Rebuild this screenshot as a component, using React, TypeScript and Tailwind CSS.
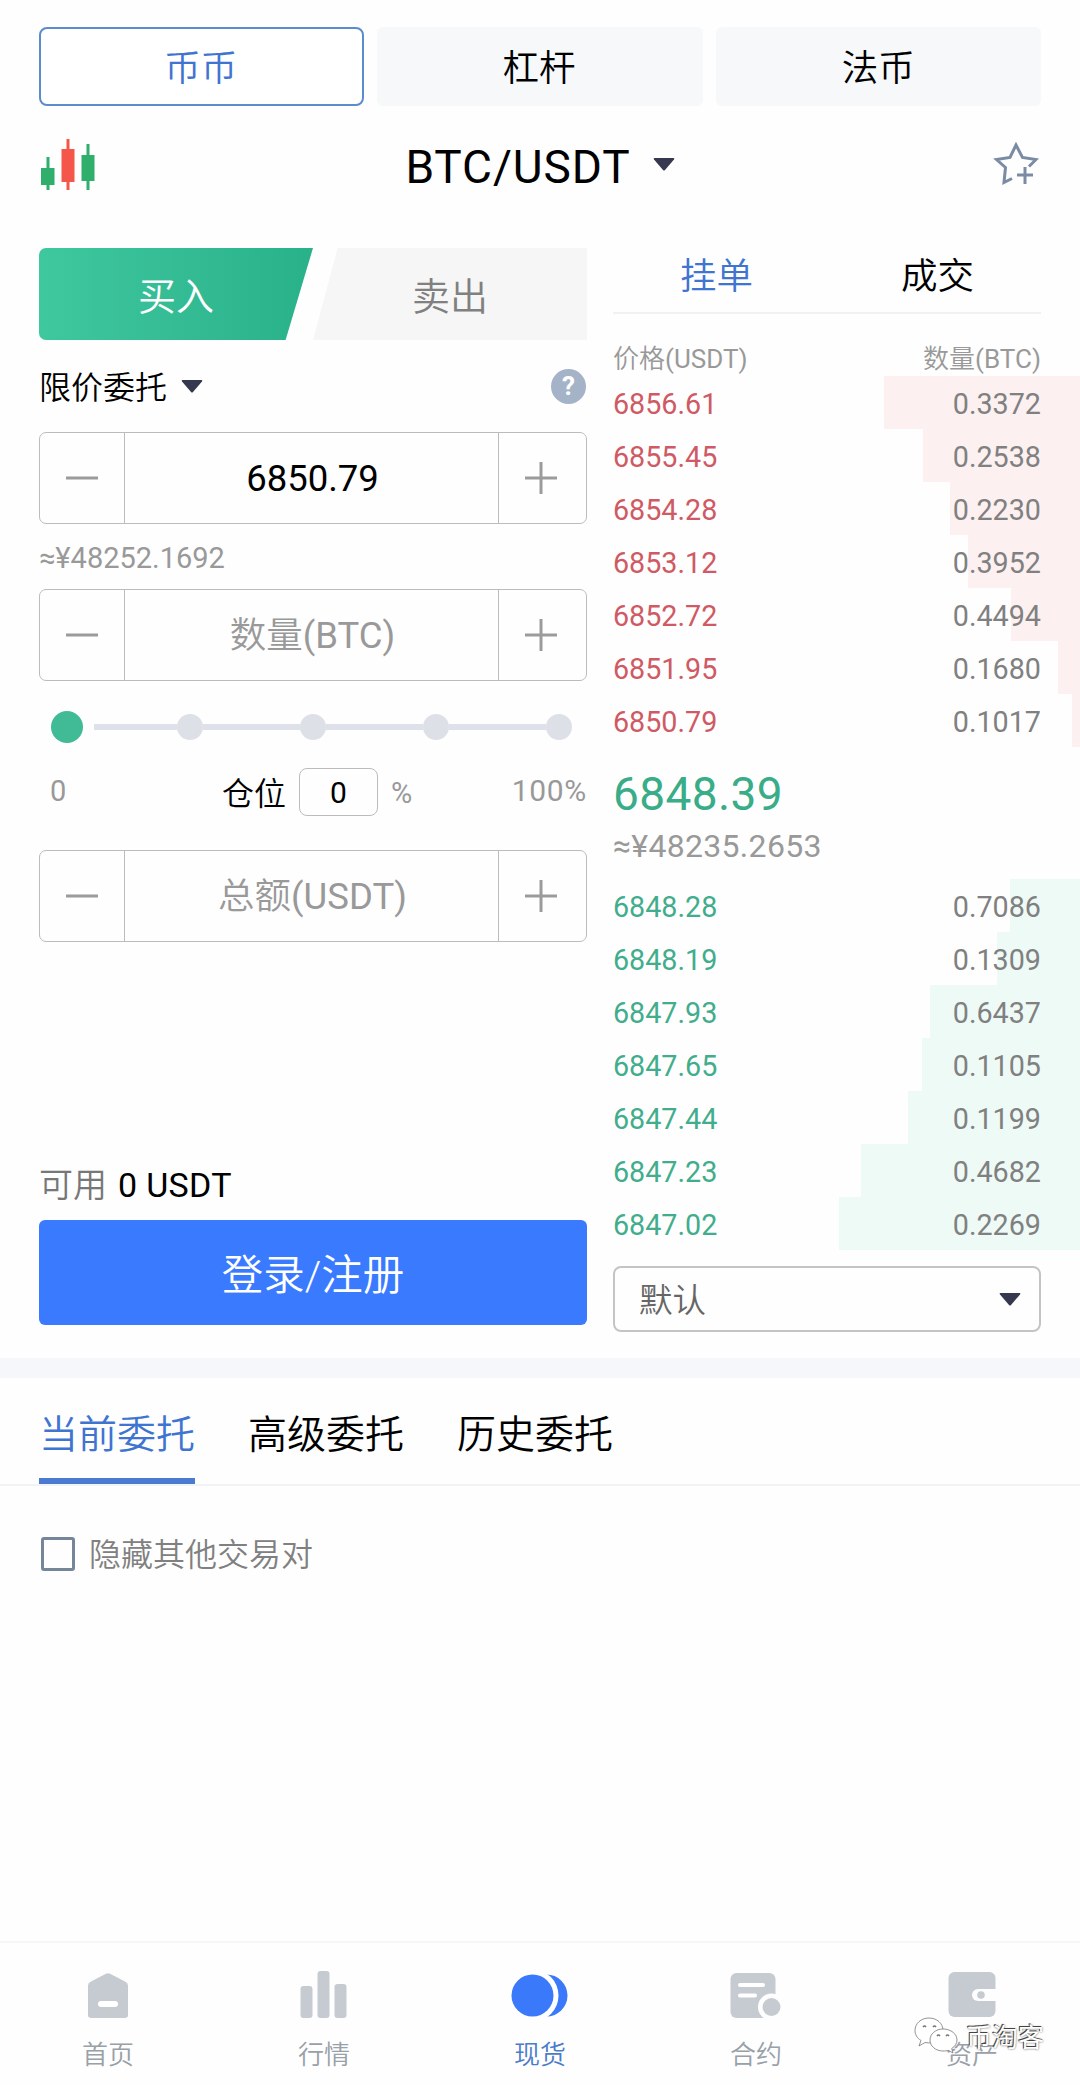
import type { ReactNode } from 'react';

type Level = { price: string; amount: string; depth: number };

const asks: Level[] = [
  { price: '6856.61', amount: '0.3372', depth: 196 },
  { price: '6855.45', amount: '0.2538', depth: 157 },
  { price: '6854.28', amount: '0.2230', depth: 130 },
  { price: '6853.12', amount: '0.3952', depth: 112 },
  { price: '6852.72', amount: '0.4494', depth: 69 },
  { price: '6851.95', amount: '0.1680', depth: 22 },
  { price: '6850.79', amount: '0.1017', depth: 8 },
];

const bids: Level[] = [
  { price: '6848.28', amount: '0.7086', depth: 70 },
  { price: '6848.19', amount: '0.1309', depth: 83 },
  { price: '6847.93', amount: '0.6437', depth: 150 },
  { price: '6847.65', amount: '0.1105', depth: 158 },
  { price: '6847.44', amount: '0.1199', depth: 172 },
  { price: '6847.23', amount: '0.4682', depth: 219 },
  { price: '6847.02', amount: '0.2269', depth: 241 },
];

function Caret() {
  return (
    <svg width="22" height="13" viewBox="0 0 22 13" className="shrink-0">
      <path d="M1.5 0h19q1.5 0 .5 1.5L12 12q-1 1-2 0L1 1.5Q0 0 1.5 0z" fill="#36384f" />
    </svg>
  );
}

// thin Chinese label followed by the currency in regular weight
function UnitLabel({ text, unit }: { text: string; unit: string }) {
  return (
    <span className="font-[350]">
      {text}
      <span className="font-normal">({unit})</span>
    </span>
  );
}

function Stepper({ children }: { children: ReactNode }) {
  return (
    <div className="flex h-[92px] shrink-0 rounded-[7px] border border-[#bcbcbc]">
      <div className="flex w-[85px] items-center justify-center border-r border-[#bcbcbc]">
        <svg width="34" height="34" viewBox="0 0 34 34" stroke="#9b9b9b" strokeWidth="3">
          <path d="M1 17h32" />
        </svg>
      </div>
      <div className="flex flex-1 items-center justify-center pt-[3px] pl-[2px] text-[36.5px] text-[#999]">
        {children}
      </div>
      <div className="flex w-[88px] items-center justify-center border-l border-[#bcbcbc] pr-[3px]">
        <svg width="34" height="34" viewBox="0 0 34 34" stroke="#9b9b9b" strokeWidth="3">
          <path d="M1 17h32M17 1v32" />
        </svg>
      </div>
    </div>
  );
}

function BookRow({ level, side }: { level: Level; side: 'ask' | 'bid' }) {
  return (
    <div className="relative flex h-[53px] shrink-0 items-center justify-between pt-[4px] pr-[39px] text-[28.7px]">
      <div
        className={`absolute inset-y-0 right-0 ${side === 'ask' ? 'bg-[#fcf0f0]' : 'bg-[#eefaf6]'}`}
        style={{ width: level.depth }}
      />
      <span className={`relative ${side === 'ask' ? 'text-[#cf5a64]' : 'text-[#41ad8c]'}`}>{level.price}</span>
      <span className="relative text-[#808080]">{level.amount}</span>
    </div>
  );
}

function NavItem({ label, active, children }: { label: string; active?: boolean; children: ReactNode }) {
  return (
    <div className="flex flex-1 flex-col items-center">
      <svg width="64" height="56" viewBox="0 0 64 56" fill={active ? '#3b79fb' : '#c6cbd1'}>
        {children}
      </svg>
      <span className={`mt-[12px] text-[26px] leading-[40px] ${active ? 'text-[#4a7cc9]' : 'text-[#98a0a8]'}`}>
        {label}
      </span>
    </div>
  );
}

export default function App() {
  return (
    <div className="flex h-[2085px] w-[1080px] flex-col overflow-hidden bg-[#fefefe] font-['Roboto','Noto_Sans_CJK_SC',sans-serif] leading-none font-normal">
      {/* market type */}
      <div className="mt-[27px] grid h-[79px] shrink-0 grid-cols-3 gap-[13px] px-[39px] text-[36.5px] font-[350]">
        <div className="flex items-center justify-center rounded-[8px] border-2 border-[#5b8ccb] bg-white pt-[6px] pr-[2px] text-[#3f74d1]">
          币币
        </div>
        <div className="flex items-center justify-center rounded-[6px] bg-[#f6f8fa] pt-[6px] pr-[2px] text-black">杠杆</div>
        <div className="flex items-center justify-center rounded-[6px] bg-[#f6f8fa] pt-[6px] text-black">法币</div>
      </div>

      {/* pair */}
      <header className="flex h-[120px] shrink-0 items-center justify-between pr-[41px] pb-[3px] pl-[41px]">
        <svg width="56" height="52" viewBox="0 0 56 52">
          <path d="M5.500 18h3v11h5v17H8.500v5h-3v-5H0V29h5.500z" fill="#30ae6b" />
          <path d="M25.500 0h3v10h5v33h-5v8h-3v-8h-5V10h5z" fill="#f4564a" />
          <path d="M45.500 5h3v11h5v26h-5v9h-3V42h-5V16h5z" fill="#30ae6b" />
        </svg>
        <div className="flex items-center gap-[22px] pt-[4px] pr-[10px]">
          <h1 className="text-[46px] tracking-[0.9px] text-black">BTC/USDT</h1>
          <div className="pb-[5px]">
            <Caret />
          </div>
        </div>
        <svg width="46" height="46" viewBox="0 0 46 46" fill="none" stroke="#7b8ba3" strokeWidth="3">
          <path d="M19 36.500l-8 4 1.500-15-9-8 13.500-2L23 3l6.500 12.500 13.500 2-7 7" />
          <path d="M24 33h16M32 25v17" />
        </svg>
      </header>

      <main className="flex h-[1132px] shrink-0 pl-[39px]">
        {/* order form */}
        <section className="flex w-[548px] flex-col pt-[22px]">
          <div className="flex h-[92px] shrink-0 text-[38px] font-[350]">
            <div className="flex w-[274px] items-center justify-center rounded-l-[7px] bg-linear-to-r from-[#3fc79e] to-[#29b18a] [clip-path:polygon(0_0,100%_0,90%_100%,0_100%)] pt-[5px] text-white">
              买入
            </div>
            <div className="flex flex-1 items-center justify-center bg-[#f6f6f6] [clip-path:polygon(9%_0,100%_0,100%_100%,0_100%)] pt-[5px] text-[#808080]">
              卖出
            </div>
          </div>

          <div className="flex h-[92px] shrink-0 items-center justify-between">
            <div className="flex items-center gap-[14px]">
              <span className="pt-[4px] text-[32px] font-[350] text-black">限价委托</span>
              <Caret />
            </div>
            <div className="mr-px flex size-[35px] items-center justify-center rounded-full bg-[#a5b3c8] text-[26px] font-bold text-white">
              ?
            </div>
          </div>

          <Stepper>
            <span className="text-black">6850.79</span>
          </Stepper>
          <div className="flex h-[65px] shrink-0 items-center pt-[4px] text-[29px] text-[#999]">≈¥48252.1692</div>
          <Stepper>
            <UnitLabel text="数量" unit="BTC" />
          </Stepper>

          {/* position slider */}
          <div className="flex h-[91px] shrink-0 items-center px-[12px]">
            <div className="size-[32px] rounded-full bg-[#41ba96]" />
            <div className="ml-[11px] flex flex-1 items-center pr-[3px]">
              {[0, 1, 2, 3].map(i => (
                <div key={i} className={`flex items-center ${i === 0 ? 'w-[109px]' : 'w-[123px]'}`}>
                  <div className="h-[6px] flex-1 bg-[#dfe1ea]" />
                  <div className="size-[26px] rounded-full bg-[#dde0e7]" />
                </div>
              ))}
            </div>
          </div>

          <div className="-mt-[4px] flex h-[48px] shrink-0 items-center pl-[11px] text-[29px] text-[#999]">
            <span className="w-[172px] pb-[2px]">0</span>
            <span className="pt-[3px] text-[32px] font-[350] text-black">仓位</span>
            <div className="mx-[13px] flex h-[48px] w-[79px] items-center justify-center rounded-[8px] border border-[#bcbcbc] pt-[2px] text-[30px] text-black">
              0
            </div>
            <span className="pt-[3px]">%</span>
            <span className="ml-auto pb-[3px] text-[30px] tracking-[0.7px]">100%</span>
          </div>
          <div className="h-[34px] shrink-0" />

          <Stepper>
            <UnitLabel text="总额" unit="USDT" />
          </Stepper>

          <div className="mt-auto mb-[18px] flex items-center gap-[11px] text-[34px]">
            <span className="font-[350] text-[#777]">可用</span>
            <span className="tracking-[0.3px] text-black">0 USDT</span>
          </div>
          <button className="mb-[33px] h-[105px] shrink-0 rounded-[6px] bg-[#3a7aff] pt-[7px] text-[41.5px] font-[350] text-white">
            登录/注册
          </button>
        </section>

        {/* order book */}
        <section className="ml-[26px] flex flex-1 flex-col pt-[22px]">
          <div className="mr-[39px] flex h-[66px] shrink-0 justify-between border-b-2 border-[#f0f1f3] px-[67px] pt-[11px] text-[36.5px] font-[350]">
            <span className="text-[#3f74d1]">挂单</span>
            <span className="text-black">成交</span>
          </div>
          <div className="mr-[39px] flex h-[62px] shrink-0 items-end justify-between pb-[4px] text-[26px] text-[#999]">
            <UnitLabel text="价格" unit="USDT" />
            <UnitLabel text="数量" unit="BTC" />
          </div>

          {asks.map(a => (
            <BookRow key={a.price} level={a} side="ask" />
          ))}

          <div className="h-[132px] shrink-0 pt-[24px]">
            <div className="text-[46px] tracking-[0.4px] text-[#39ac88]">6848.39</div>
            <div className="mt-[13px] text-[32px] tracking-[0.3px] text-[#999]">≈¥48235.2653</div>
          </div>

          {bids.map(b => (
            <BookRow key={b.price} level={b} side="bid" />
          ))}

          <div className="mt-[16px] mr-[39px] flex h-[66px] shrink-0 items-center justify-between rounded-[8px] border-2 border-[#c4c4c4] pr-[18px] pl-[24px]">
            <span className="pt-[4px] text-[33.5px] font-[350] text-[#666]">默认</span>
            <Caret />
          </div>
        </section>
      </main>

      <div className="h-[20px] shrink-0 bg-[#f5f7fa]" />

      {/* orders */}
      <div className="flex h-[108px] shrink-0 gap-[53px] border-b-2 border-[#f2f3f4] px-[39px] text-[39px] font-[350] text-black">
        <div className="flex items-center border-b-6 border-[#4a7bd0] pt-[15px] text-[#3f74d1]">当前委托</div>
        <div className="flex items-center pt-[9px]">高级委托</div>
        <div className="flex items-center pt-[9px]">历史委托</div>
      </div>
      <div className="mt-[50px] flex items-center gap-[14px] pl-[41px]">
        <div className="size-[34px] rounded-[3px] border-3 border-[#75869b]" />
        <span className="pt-[3px] text-[32px] font-[350] text-[#808080]">隐藏其他交易对</span>
      </div>

      {/* bottom nav */}
      <nav className="relative mt-auto flex h-[144px] shrink-0 border-t-2 border-[#f5f6f6] pt-[24px] font-[350]">
        <NavItem label="首页">
          <path d="M15 14.500L29.500 7q2.500-1.300 5 0L49 14.500q3 1.500 3 4V48q0 3-3 3H15q-3 0-3-3V18.500q0-2.500 3-4z" />
          <rect x="22" y="34" width="20" height="6" rx="3" fill="#fff" />
        </NavItem>
        <NavItem label="行情">
          <rect x="8.500" y="19" width="12" height="32" rx="3" />
          <rect x="25.500" y="4" width="12" height="47" rx="3" />
          <rect x="42.500" y="17" width="12" height="34" rx="3" />
        </NavItem>
        <NavItem label="现货" active>
          <circle cx="38.500" cy="28.500" r="21" />
          <circle cx="24.500" cy="28.500" r="26" fill="#fefefe" />
          <circle cx="24.500" cy="28.500" r="21" />
        </NavItem>
        <NavItem label="合约">
          <rect x="6.500" y="6" width="45" height="45" rx="6" />
          <path d="M16 18h23M16 28.500h15" stroke="#fff" strokeWidth="4" strokeLinecap="round" />
          <circle cx="47.500" cy="40" r="13.500" fill="#fefefe" />
          <circle cx="47.500" cy="40" r="9" />
        </NavItem>
        <NavItem label="资产">
          <rect x="8.500" y="5" width="47" height="45" rx="6" />
          <path d="M56 22H38a5.500 5.500 0 0 0 0 12h18z" fill="#fefefe" />
          <circle cx="41" cy="28" r="3.800" />
        </NavItem>

        {/* account watermark */}
        <div className="absolute top-[74px] right-[36px] flex items-center gap-[8px]">
          <svg width="44" height="38" viewBox="0 0 44 38" fill="#fff" stroke="#777" strokeWidth="0.8">
            <path d="M15 1C7 1 1 6.500 1 13.500c0 4 2 7.500 6 10L5 29l6-3.500c9 2 18-3.500 18-12C29 6.500 23 1 15 1z" />
            <path d="M29 12c-7.500 0-13 5-13 11s5.500 11 13 11c2 0 4 0 5-.8l5 2.800-1.300-4.500c3.300-2 5.300-5 5.300-8.500 0-6-6-11-14-11z" />
            <path d="M9 10q1.500-2 3 0M19 10q1.500-2 3 0M23 19q1.500-2 3 0M32 19q1.500-2 3 0" strokeWidth="1.500" />
          </svg>
          <span className="pt-[4px] text-[26px] font-normal text-white [text-shadow:-1px_-1px_0_#444,0_0_2px_#444]">
            币淘客
          </span>
        </div>
      </nav>
    </div>
  );
}
